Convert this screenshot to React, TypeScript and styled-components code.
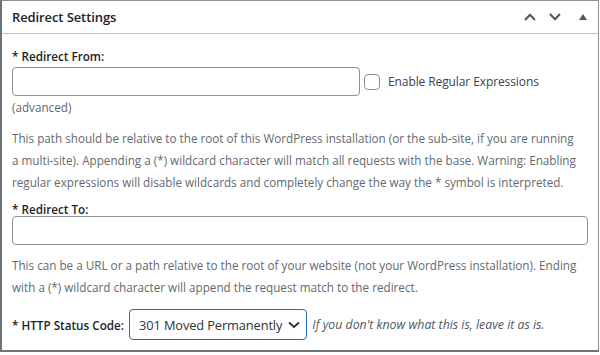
import React from "react";
import styled, { createGlobalStyle } from "styled-components";

const GlobalStyle = createGlobalStyle`
  body {
    margin: 0;
    background: #ffffff;
    font-family: "Open Sans", "Noto Sans", sans-serif;
  }
`;

const Panel = styled.div`
  width: 596px;
  height: 349px;
  border: 1px solid #8c8f94;
  border-left: 2px solid #6f7378;
  border-bottom: 2px solid #6f7378;
  background: #fff;
  color: #1d2327;
`;

const Header = styled.div`
  height: 32px;
  border-bottom: 1px solid #c3c4c7;
  display: flex;
  align-items: center;
  justify-content: space-between;
  padding: 0 8px 0 10px;
`;

const Title = styled.h2`
  margin: 0;
  font-size: 13px;
  letter-spacing: -0.1px;
  font-weight: 600;
  color: #1d2327;
`;

const Controls = styled.div`
  display: flex;
  align-items: center;
  gap: 13px;
  color: #50575e;
`;

const IconButton = styled.span<{ $w?: number; $ml?: number }>`
  display: flex;
  align-items: center;
  justify-content: center;
  width: ${(p) => p.$w ?? 12}px;
  margin-left: ${(p) => p.$ml ?? 0}px;
`;

const Body = styled.div`
  padding: 13px 10px 0 10px;
  font-size: 11.7px;
`;

const Label = styled.div<{ $mt?: number }>`
  font-weight: 600;
  line-height: 18px;
  margin-top: ${(p) => p.$mt ?? 0}px;
`;

const Row = styled.div<{ $mt?: number }>`
  display: flex;
  align-items: center;
  margin-top: ${(p) => p.$mt ?? 0}px;
`;

const TextInput = styled.input<{ $w?: string }>`
  box-sizing: border-box;
  width: ${(p) => p.$w ?? "100%"};
  height: 29px;
  border: 1px solid #8c8f94;
  border-radius: 4px;
  padding: 0 8px;
  font: inherit;
  outline: none;
`;

const Checkbox = styled.span`
  box-sizing: border-box;
  width: 16px;
  height: 16px;
  border: 1px solid #8c8f94;
  border-radius: 4px;
  margin-left: 4px;
`;

const CheckLabel = styled.span`
  font-size: 12px;
  letter-spacing: -0.1px;
  margin-left: 8px;
  color: #3c434a;
`;

const Muted = styled.p<{ $mt?: number; $lh?: number; $maxw?: number }>`
  margin: ${(p) => p.$mt ?? 0}px 0 0 0;
  max-width: ${(p) => (p.$maxw ? `${p.$maxw}px` : "none")};
  line-height: ${(p) => p.$lh ?? 22}px;
  color: #646970;
`;

const Select = styled.div`
  box-sizing: border-box;
  height: 31px;
  display: flex;
  align-items: center;
  gap: 6px;
  margin-left: 5px;
  padding: 0 6px 0 9px;
  border: 1px solid #2271b1;
  border-radius: 4px;
  font-size: 12.8px;
  letter-spacing: -0.1px;
  color: #2c3338;
`;

const Hint = styled.span`
  font-size: 12.3px;
  font-style: italic;
  color: #50575e;
  margin-left: 5px;
`;

const Chevron = ({ up }: { up?: boolean }) => (
  <svg width="12" height="8" viewBox="0 0 12 8" fill="none">
    <path
      d={up ? "M1 7 L6 1.8 L11 7" : "M1 1 L6 6.2 L11 1"}
      stroke="currentColor"
      strokeWidth="2"
    />
  </svg>
);

const App: React.FC = () => {
  return (
    <>
      <GlobalStyle />
      <Panel>
        <Header>
          <Title>Redirect Settings</Title>
          <Controls>
            <IconButton>
              <Chevron up />
            </IconButton>
            <IconButton>
              <Chevron />
            </IconButton>
            <IconButton $w={14} $ml={2}>
              <svg width="8" height="6" viewBox="0 0 8 6">
                <path d="M0 6 L4 0 L8 6 Z" fill="#50575e" />
              </svg>
            </IconButton>
          </Controls>
        </Header>
        <Body>
          <Label>* Redirect From:</Label>
          <Row $mt={2}>
            <TextInput $w="348px" />
            <Checkbox />
            <CheckLabel>Enable Regular Expressions</CheckLabel>
          </Row>
          <Muted $mt={2} $lh={18}>
            (advanced)
          </Muted>
          <Muted $mt={11} $maxw={568}>
            This path should be relative to the root of this WordPress installation (or the
            sub-site, if you are running a multi-site). Appending a (*) wildcard character will
            match all requests with the base. Warning: Enabling regular expressions will disable
            wildcards and completely change the way the * symbol is interpreted.
          </Muted>
          <Label $mt={7}>* Redirect To:</Label>
          <Row $mt={-2}>
            <TextInput />
          </Row>
          <Muted $mt={9}>
            This can be a URL or a path relative to the root of your website (not your WordPress
            installation). Ending with a (*) wildcard character will append the request match to
            the redirect.
          </Muted>
          <Row $mt={11}>
            <Label>* HTTP Status Code:</Label>
            <Select>
              301 Moved Permanently
              <svg width="12" height="8" viewBox="0 0 12 8" fill="none">
                <path d="M1 1.5 L6 6 L11 1.5" stroke="#2c3338" strokeWidth="1.8" />
              </svg>
            </Select>
            <Hint>If you don't know what this is, leave it as is.</Hint>
          </Row>
        </Body>
      </Panel>
    </>
  );
};

export default App;
